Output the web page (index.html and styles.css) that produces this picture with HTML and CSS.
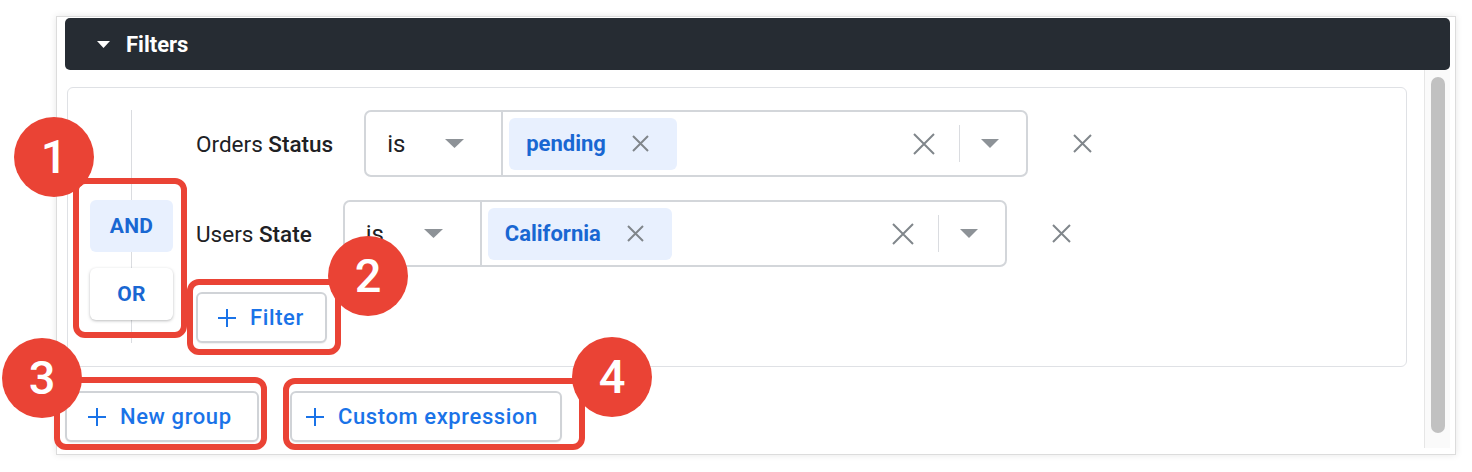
FILE: index.html
```html
<!DOCTYPE html>
<html>
<head>
<meta charset="utf-8">
<link rel="stylesheet" href="styles.css">
</head>
<body>
<div class="page">
  <div class="panel">
    <div class="panel-header">
      <svg class="caret" width="13" height="7" viewBox="0 0 13 7"><path d="M0 0H13L6.5 7Z" fill="#fff"/></svg>
      <span class="title">Filters</span>
    </div>
    <div class="panel-body">
      <div class="scroll">
        <div class="group">
          <div class="logic">
            <div class="toggle active">AND</div>
            <div class="toggle raised">OR</div>
          </div>
          <div class="rows">
            <div class="row">
              <span class="label">Orders <b>Status</b></span>
              <div class="select">
                <div class="op">
                  <span class="op-text">is</span>
                  <svg class="arrow" width="19" height="9" viewBox="0 0 19 9"><path d="M0 0H19L9.5 9Z"/></svg>
                </div>
                <div class="value">
                  <span class="chip">pending<svg class="chip-x" width="17" height="17" viewBox="0 0 17 17"><path d="M1 1L16 16M16 1L1 16"/></svg></span>
                  <span class="spacer"></span>
                  <svg class="clear-x" width="22" height="22" viewBox="0 0 22 22"><path d="M1 1L21 21M21 1L1 21"/></svg>
                  <span class="sep"></span>
                  <svg class="arrow" width="18" height="9" viewBox="0 0 18 9"><path d="M0 0H18L9 9Z"/></svg>
                </div>
              </div>
              <svg class="remove-x" width="19" height="19" viewBox="0 0 19 19"><path d="M1 1L18 18M18 1L1 18"/></svg>
            </div>
            <div class="row">
              <span class="label">Users <b>State</b></span>
              <div class="select">
                <div class="op">
                  <span class="op-text">is</span>
                  <svg class="arrow" width="19" height="9" viewBox="0 0 19 9"><path d="M0 0H19L9.5 9Z"/></svg>
                </div>
                <div class="value">
                  <span class="chip">California<svg class="chip-x" width="17" height="17" viewBox="0 0 17 17"><path d="M1 1L16 16M16 1L1 16"/></svg></span>
                  <span class="spacer"></span>
                  <svg class="clear-x" width="22" height="22" viewBox="0 0 22 22"><path d="M1 1L21 21M21 1L1 21"/></svg>
                  <span class="sep"></span>
                  <svg class="arrow" width="18" height="9" viewBox="0 0 18 9"><path d="M0 0H18L9 9Z"/></svg>
                </div>
              </div>
              <svg class="remove-x" width="19" height="19" viewBox="0 0 19 19"><path d="M1 1L18 18M18 1L1 18"/></svg>
            </div>
            <div class="row-actions">
              <button class="btn btn-filter"><svg class="plus" width="18" height="18" viewBox="0 0 18 18"><path d="M9 0V18M0 9H18"/></svg>Filter</button>
            </div>
          </div>
        </div>
        <div class="actions">
          <button class="btn btn-group"><svg class="plus" width="18" height="18" viewBox="0 0 18 18"><path d="M9 0V18M0 9H18"/></svg>New group</button>
          <button class="btn btn-custom"><svg class="plus" width="18" height="18" viewBox="0 0 18 18"><path d="M9 0V18M0 9H18"/></svg>Custom expression</button>
        </div>
      </div>
      <div class="scrollbar"><div class="thumb"></div></div>
    </div>
  </div>

  <div class="mark box box1"></div>
  <div class="mark box box2"></div>
  <div class="mark box box3"></div>
  <div class="mark box box4"></div>
  <div class="mark badge badge1">1</div>
  <div class="mark badge badge2">2</div>
  <div class="mark badge badge3">3</div>
  <div class="mark badge badge4">4</div>
</div>
</body>
</html>
```

FILE: styles.css
```css
* { box-sizing: border-box; }
body {
  margin: 0;
  background: #fff;
  font-family: Roboto, "Noto Sans", Arial, sans-serif;
  color: #202124;
}
.page {
  position: relative;
  width: 1472px;
  height: 472px;
  padding: 16px 0 0 56px;
  overflow: hidden;
}
.panel {
  width: 1400px;
  height: 439px;
  border: 1px solid #dcdcdc;
  box-shadow: 0 0 7px rgba(0, 0, 0, 0.10);
  padding: 1px 5px 0 8px;
  display: flex;
  flex-direction: column;
  background: #fff;
}
.panel-header {
  height: 52px;
  flex: none;
  background: #262c33;
  border-radius: 5px;
  display: flex;
  align-items: center;
  padding-left: 32px;
  gap: 16px;
  color: #fff;
  font-weight: 700;
  font-size: 22px;
}
.caret { margin-top: 1px; }
.panel-body {
  height: 378px;
  flex: none;
  display: flex;
}
.scroll {
  flex: 1;
  padding: 17px 17px 0 2px;
}
.group {
  height: 280px;
  border: 1px solid #dfe1e5;
  border-radius: 6px;
  padding-top: 22px;
  display: flex;
}
.logic {
  width: 128px;
  height: 233px;
  flex: none;
  background: linear-gradient(#dadce0, #dadce0) 63px 0 / 1px 100% no-repeat;
  display: flex;
  flex-direction: column;
  align-items: flex-start;
  padding: 90px 0 0 22px;
  gap: 16px;
}
.toggle {
  width: 83px;
  height: 52px;
  border-radius: 6px;
  display: flex;
  align-items: center;
  justify-content: center;
  font-size: 21px;
  font-weight: 700;
  color: #1967d2;
  letter-spacing: 0.3px;
}
.toggle.active { background: #e8f0fe; }
.toggle.raised {
  background: #fff;
  box-shadow: 0 1px 3px rgba(60, 64, 67, 0.35);
}
.rows {
  display: flex;
  flex-direction: column;
}
.row {
  height: 67px;
  display: flex;
  align-items: center;
  margin-bottom: 23px;
}
.label {
  font-size: 22.5px;
  color: #202124;
  margin-right: 31px;
}
.label b { font-weight: 500; }
.select {
  width: 664px;
  height: 67px;
  border: 2px solid #d3d6da;
  border-radius: 7px;
  display: flex;
}
.op {
  width: 137px;
  border-right: 2px solid #d3d6da;
  display: flex;
  align-items: center;
  padding-left: 21px;
}
.op-text {
  font-size: 24px;
  color: #202124;
  width: 58px;
}
.arrow { fill: #8d9297; }
.value {
  flex: 1;
  display: flex;
  align-items: center;
  padding: 0 27px 0 6px;
}
.chip {
  height: 52px;
  background: #e8f0fe;
  border-radius: 6px;
  display: flex;
  align-items: center;
  padding: 0 28px 0 17px;
  font-size: 22px;
  font-weight: 700;
  color: #1967d2;
}
.chip-x {
  margin-left: 26px;
  stroke: #80868b;
  stroke-width: 2;
  fill: none;
}
.spacer { flex: 1; }
.clear-x {
  stroke: #80868b;
  stroke-width: 2;
  fill: none;
}
.sep {
  width: 1px;
  height: 37px;
  background: #dadce0;
  margin: 0 21px 0 24px;
}
.remove-x {
  margin-left: 45px;
  stroke: #80868b;
  stroke-width: 2;
  fill: none;
}
.row-actions {
  margin-top: 2px;
}
.btn {
  height: 51px;
  border: 2px solid #d0d3d7;
  border-radius: 6px;
  background: #fff;
  display: inline-flex;
  align-items: center;
  gap: 14px;
  font-family: Roboto, "Noto Sans", Arial, sans-serif;
  font-size: 22px;
  font-weight: 500;
  letter-spacing: 0.6px;
  color: #1a73e8;
  box-shadow: 0 1px 1px rgba(60, 64, 67, 0.08);
  cursor: pointer;
}
.plus {
  stroke: #1a73e8;
  stroke-width: 2;
  fill: none;
  flex: none;
}
.btn-filter { width: 131px; padding: 0 0 0 20px; }
.actions {
  display: flex;
  gap: 31px;
  margin: 24px 0 0 -2px;
}
.btn-group { width: 194px; padding: 0 0 0 21px; }
.btn-custom { width: 272px; padding: 0 0 0 14px; }
.scrollbar {
  width: 26px;
  flex: none;
  border-left: 1px solid #e6e6e6;
  background: #fafafa;
  padding: 7px 5px 0 6px;
}
.thumb {
  width: 14px;
  height: 356px;
  border-radius: 7px;
  background: #c1c1c1;
}

/* annotation overlays */
.mark { position: absolute; }
.box {
  border: 6px solid #ea4335;
  border-radius: 12px;
}
.box1 { left: 73px; top: 178px; width: 114px; height: 160px; }
.box2 { left: 187px; top: 279px; width: 154px; height: 76px; }
.box3 { left: 54px; top: 377px; width: 213px; height: 73px; }
.box4 { left: 283px; top: 378px; width: 302px; height: 72px; }
.badge {
  width: 80px;
  height: 80px;
  border-radius: 50%;
  background: #ea4335;
  color: #fff;
  font-family: Roboto, Arial, sans-serif;
  font-weight: 500;
  font-size: 47px;
  line-height: 80px;
  text-align: center;
}
.badge1 { left: 14px; top: 117px; }
.badge2 { left: 328px; top: 236px; }
.badge3 { left: 2px; top: 338px; }
.badge4 { left: 572px; top: 337px; }
```
